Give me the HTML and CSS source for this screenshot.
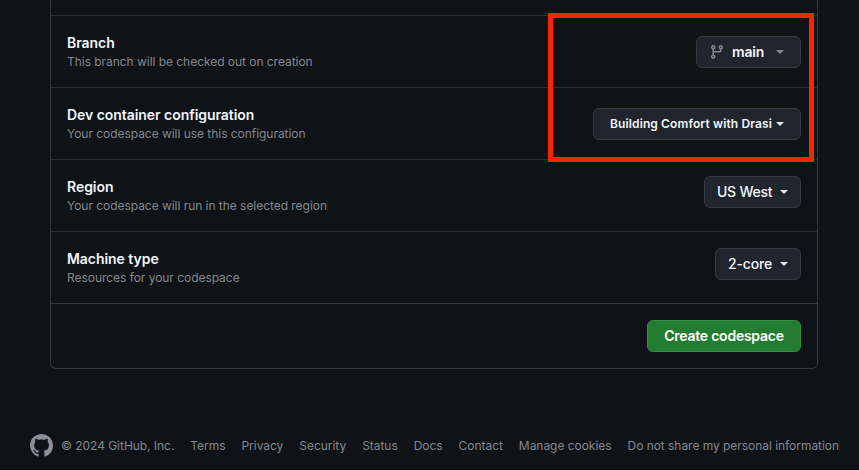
FILE: index.html
```
<!DOCTYPE html>
<html lang="en">
<head>
<meta charset="utf-8">
<title>Create codespace</title>
<link rel="stylesheet" href="styles.css">
</head>
<body>
<main class="card">
  <div class="card-top"></div>
  <section class="row">
    <div class="label"><h2>Branch</h2><p>This branch will be checked out on creation</p></div>
    <button class="btn btn-branch">
      <svg class="branch-icon" width="16" height="16" viewBox="0 0 16 16"><path d="M9.5 3.25a2.25 2.25 0 1 1 3 2.122V6A2.5 2.5 0 0 1 10 8.5H6a1 1 0 0 0-1 1v1.128a2.251 2.251 0 1 1-1.5 0V5.372a2.25 2.25 0 1 1 1.5 0v1.836A2.493 2.493 0 0 1 6 7h4a1 1 0 0 0 1-1v-.628A2.25 2.25 0 0 1 9.5 3.25Zm-6 0a.75.75 0 1 0 1.5 0 .75.75 0 0 0-1.5 0Zm8.25-.75a.75.75 0 1 0 0 1.5.75.75 0 0 0 0-1.5ZM4.25 12a.75.75 0 1 0 0 1.5.75.75 0 0 0 0-1.5Z"/></svg>
      <span>main</span><i class="caret"></i>
    </button>
  </section>
  <section class="row">
    <div class="label"><h2>Dev container configuration</h2><p>Your codespace will use this configuration</p></div>
    <button class="btn btn-config"><span>Building Comfort with Drasi</span><i class="caret"></i></button>
  </section>
  <section class="row">
    <div class="label"><h2>Region</h2><p>Your codespace will run in the selected region</p></div>
    <button class="btn btn-region"><span>US West</span><i class="caret"></i></button>
  </section>
  <section class="row">
    <div class="label"><h2>Machine type</h2><p>Resources for your codespace</p></div>
    <button class="btn btn-machine"><span>2-core</span><i class="caret"></i></button>
  </section>
  <div class="row actions"><button class="btn btn-primary"><span>Create codespace</span></button></div>
  <div class="highlight"></div>
</main>
<footer class="footer">
  <svg class="logo" width="23" height="23" viewBox="0 0 16 16"><path d="M8 0c4.42 0 8 3.58 8 8a8.013 8.013 0 0 1-5.45 7.59c-.4.08-.55-.17-.55-.38 0-.27.01-1.13.01-2.2 0-.75-.25-1.23-.54-1.48 1.78-.2 3.65-.88 3.65-3.95 0-.88-.31-1.59-.82-2.15.08-.2.36-1.02-.08-2.12 0 0-.67-.22-2.2.82-.64-.18-1.32-.27-2-.27-.68 0-1.36.09-2 .27-1.53-1.03-2.2-.82-2.2-.82-.44 1.1-.16 1.92-.08 2.12-.51.56-.82 1.28-.82 2.15 0 3.06 1.86 3.75 3.64 3.95-.23.2-.44.55-.51 1.07-.46.21-1.61.55-2.33-.66-.15-.24-.6-.83-1.23-.82-.67.01-.27.38.01.53.34.19.73.9.82 1.13.16.45.68 1.31 2.69.94 0 .67.01 1.3.01 1.49 0 .21-.15.45-.55.38A7.995 7.995 0 0 1 0 8c0-4.42 3.58-8 8-8Z"/></svg>
  <span class="copyright">© 2024 GitHub, Inc.</span>
  <nav>
    <a>Terms</a><a>Privacy</a><a>Security</a><a>Status</a><a>Docs</a><a>Contact</a><a>Manage cookies</a><a>Do not share my personal information</a>
  </nav>
</footer>
</body>
</html>
```
FILE: styles.css
```
* { box-sizing: border-box; }
body {
  margin: 0;
  height: 470px;
  overflow: hidden;
  background: #0f1217;
  border-bottom: 1px solid #07090c;
  font-family: Inter, "Liberation Sans", sans-serif;
  color: #f0f6fc;
  white-space: nowrap;
}
.card {
  position: relative;
  width: 768px;
  height: 369px;
  margin-left: 50px;
  border: 1px solid #34383e;
  border-top: 0;
  border-radius: 0 0 6px 6px;
}
.card-top { height: 15px; }
.row {
  display: flex;
  justify-content: space-between;
  align-items: flex-start;
  height: 72px;
  padding: 20px 16px 0;
  border-top: 1px solid #2b2f35;
}
h2 {
  margin: -4px 0 0;
  font-size: 14px;
  line-height: 21px;
  font-weight: 600;
  letter-spacing: -0.05px;
}
p {
  margin: 0;
  font-size: 12px;
  line-height: 18px;
  letter-spacing: -0.04px;
  color: #83888f;
}
.btn {
  display: flex;
  align-items: center;
  height: 32px;
  padding: 0;
  border: 1px solid #363b42;
  border-radius: 6px;
  background: #20242c;
  color: #f0f6fc;
  font: 500 14px/20px Inter, "Liberation Sans", sans-serif;
}
.caret {
  width: 8px;
  height: 4px;
  margin-left: auto;
  background: #e2e6eb;
  clip-path: polygon(0 0, 100% 0, 50% 100%);
}
.row .btn-region, .row .btn-machine { margin-top: -4px; }
.btn-branch { width: 105px; padding: 0 16px 0 12px; font-weight: 600; letter-spacing: -0.15px; }
.branch-icon { margin-right: 7px; fill: #83888f; }
.btn-branch .caret { background: #83888f; }
.btn-config { width: 208px; padding: 0 16px; font-size: 12px; font-weight: 600; letter-spacing: 0.12px; }
.btn-region { width: 97px; padding: 0 12px; letter-spacing: -0.25px; }
.btn-machine { width: 86px; padding: 0 12px; letter-spacing: -0.15px; }
.actions { height: 65px; padding-top: 16px; justify-content: flex-end; border-color: #34383e; }
.btn-primary {
  width: 154px;
  justify-content: center;
  border-color: #388e42;
  background: #237d30;
  color: #fff;
  font-weight: 600;
  letter-spacing: -0.24px;
}
.highlight {
  position: absolute;
  left: 497px;
  top: 13px;
  width: 266px;
  height: 149px;
  border: 5px solid #fc2402;
}
.footer {
  display: flex;
  align-items: center;
  margin: 64px 0 0 30px;
  height: 25px;
  font-size: 12px;
  letter-spacing: -0.04px;
  color: #83888f;
}
.logo { fill: #8a8f99; }
.copyright { margin-left: 8px; }
.footer nav { display: flex; gap: 16px; margin-left: 16px; }
```
